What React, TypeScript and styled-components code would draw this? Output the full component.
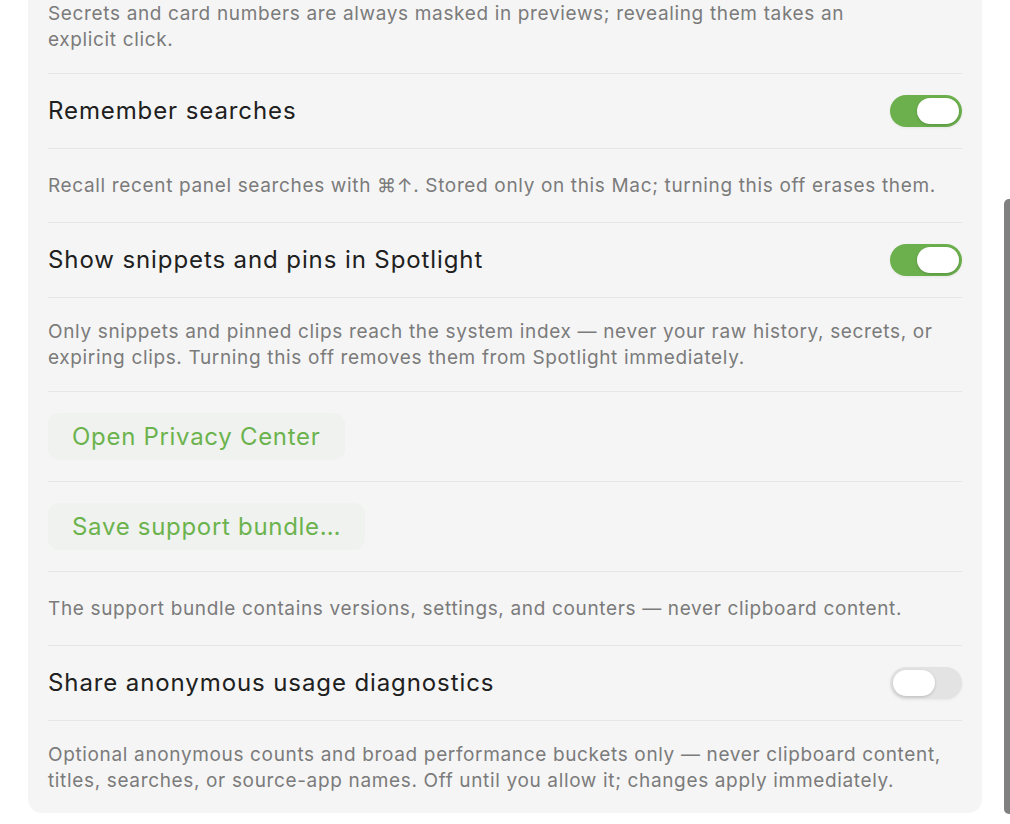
import React from "react";
import styled, { createGlobalStyle } from "styled-components";

const GlobalStyle = createGlobalStyle`
  html, body {
    margin: 0;
    padding: 0;
    background: #ffffff;
    overflow: hidden;
  }
  body {
    font-family: Inter, "Noto Sans", "Liberation Sans", sans-serif;
    -webkit-font-smoothing: antialiased;
  }
  * { box-sizing: border-box; }
`;

const Viewport = styled.div`
  position: relative;
  width: 1010px;
  height: 824px;
  overflow: hidden;
  display: flex;
  flex-direction: column;
  justify-content: flex-end;
  padding: 0 28px 11px 28px;
`;

const Card = styled.section`
  flex-shrink: 0;
  background: #f5f5f5;
  border-radius: 14px;
  padding: 0 20px;
`;

const Row = styled.div<{ $text?: boolean }>`
  display: flex;
  align-items: center;
  justify-content: space-between;
  gap: 24px;
  min-height: 74px;
  padding: ${(p) => (p.$text ? "20.5px 0" : "21px 0")};
  & + & {
    border-top: 1px solid #e6e6e6;
  }
  &:last-child {
    padding-bottom: 19.5px;
  }
`;

const Title = styled.span`
  font-size: 24px;
  line-height: 30px;
  color: #202020;
  letter-spacing: 0.9px;
`;

const Desc = styled.p<{ $maxWidth?: number }>`
  margin: 0;
  max-width: ${(p) => (p.$maxWidth ? `${p.$maxWidth}px` : "none")};
  font-size: 19px;
  line-height: 26px;
  letter-spacing: 0.65px;
  color: #7b7b7b;
`;

const Track = styled.button<{ $on: boolean }>`
  position: relative;
  flex-shrink: 0;
  width: 72px;
  height: 32px;
  border: none;
  padding: 0;
  border-radius: 16px;
  background: ${(p) => (p.$on ? "#6cb04e" : "#e3e3e3")};
  box-shadow: 0 1px 3px rgba(0, 0, 0, 0.06);
  cursor: pointer;
`;

const Knob = styled.span<{ $on: boolean }>`
  position: absolute;
  top: 3px;
  left: ${(p) => (p.$on ? "27px" : "3px")};
  width: 42px;
  height: 26px;
  border-radius: 13px;
  background: #ffffff;
  box-shadow: 0 1px 3px rgba(0, 0, 0, 0.18);
`;

const ActionButton = styled.button`
  height: 47px;
  padding: 0 24px;
  border: none;
  border-radius: 11px;
  background: #eff2ee;
  color: #6cb34e;
  font-family: inherit;
  font-size: 24px;
  line-height: 30px;
  letter-spacing: 0.7px;
  cursor: pointer;
`;

const ScrollThumb = styled.div`
  position: absolute;
  right: -4px;
  bottom: 10px;
  width: 10px;
  height: 615px;
  border-radius: 5px;
  background: #808080;
`;

const Toggle = ({ on }: { on: boolean }) => (
  <Track $on={on} role="switch" aria-checked={on}>
    <Knob $on={on} />
  </Track>
);

const ToggleRow = ({ title, on }: { title: string; on: boolean }) => (
  <Row>
    <Title>{title}</Title>
    <Toggle on={on} />
  </Row>
);

const DescRow = ({ children, maxWidth }: { children: React.ReactNode; maxWidth?: number }) => (
  <Row $text>
    <Desc $maxWidth={maxWidth}>{children}</Desc>
  </Row>
);

export default function App() {
  return (
    <>
      <GlobalStyle />
      <Viewport>
        <Card>
          <DescRow maxWidth={860}>
            Secrets and card numbers are always masked in previews; revealing them takes an
            explicit click.
          </DescRow>
          <ToggleRow title="Remember searches" on={true} />
          <DescRow>
            Recall recent panel searches with ⌘↑. Stored only on this Mac; turning this off erases them.
          </DescRow>
          <ToggleRow title="Show snippets and pins in Spotlight" on={true} />
          <DescRow>
            Only snippets and pinned clips reach the system index — never your raw history, secrets, or
            expiring clips. Turning this off removes them from Spotlight immediately.
          </DescRow>
          <Row>
            <ActionButton>Open Privacy Center</ActionButton>
          </Row>
          <Row>
            <ActionButton>Save support bundle…</ActionButton>
          </Row>
          <DescRow>
            The support bundle contains versions, settings, and counters — never clipboard content.
          </DescRow>
          <ToggleRow title="Share anonymous usage diagnostics" on={false} />
          <DescRow>
            Optional anonymous counts and broad performance buckets only — never clipboard content,
            titles, searches, or source-app names. Off until you allow it; changes apply immediately.
          </DescRow>
        </Card>
        <ScrollThumb />
      </Viewport>
    </>
  );
}
